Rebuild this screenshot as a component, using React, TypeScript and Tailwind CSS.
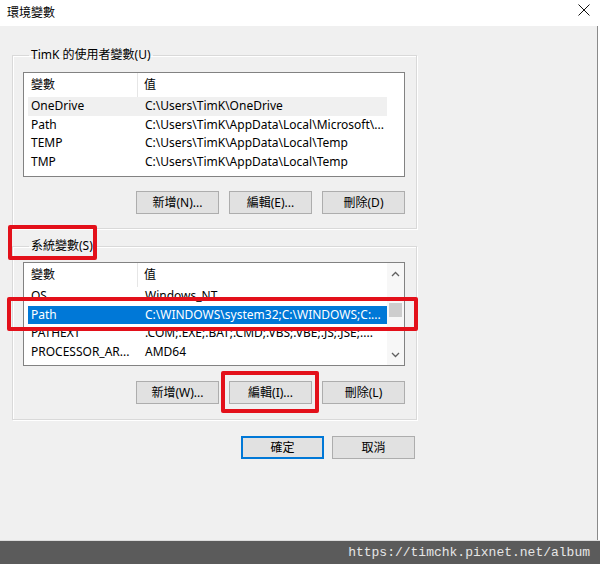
import React from "react";

type Row = { name: string; value: string; tone?: "hover" | "selected" };

const userVars: Row[] = [
  { name: "OneDrive", value: "C:\\Users\\TimK\\OneDrive", tone: "hover" },
  { name: "Path", value: "C:\\Users\\TimK\\AppData\\Local\\Microsoft\\..." },
  { name: "TEMP", value: "C:\\Users\\TimK\\AppData\\Local\\Temp" },
  { name: "TMP", value: "C:\\Users\\TimK\\AppData\\Local\\Temp" },
];

const systemVars: Row[] = [
  { name: "OS", value: "Windows_NT" },
  { name: "Path", value: "C:\\WINDOWS\\system32;C:\\WINDOWS;C:...", tone: "selected" },
  { name: "PATHEXT", value: ".COM;.EXE;.BAT;.CMD;.VBS;.VBE;.JS;.JSE;...." },
  { name: "PROCESSOR_AR...", value: "AMD64" },
];

function Chevron({ up }: { up?: boolean }) {
  return (
    <svg width="9" height="6" viewBox="0 0 9 6" className="text-[#606060]">
      <polyline
        points={up ? "1,5 4.5,1.5 8,5" : "1,1 4.5,4.5 8,1"}
        fill="none"
        stroke="currentColor"
        strokeWidth="1.3"
      />
    </svg>
  );
}

function ListView({ rows, height, scroll }: { rows: Row[]; height: string; scroll?: boolean }) {
  return (
    <div className={`flex w-[382px] ${height} border border-[#828282] bg-white overflow-hidden`}>
      <div className="flex-1 overflow-hidden">
        <div className="flex h-[24px] items-center">
          <div className="w-[114px] h-full flex items-center pl-[7px] border-r border-[#e6e6e6]">變數</div>
          <div className="pl-[6px]">值</div>
        </div>
        {rows.map((r) => (
          <div
            key={r.name}
            className={`ml-[4px] flex h-[18.5px] items-center whitespace-nowrap ${
              r.tone === "selected"
                ? "bg-[#0078d7] text-white"
                : r.tone === "hover"
                ? "bg-[#f0f0f0]"
                : ""
            }`}
          >
            <div className="w-[117px] pl-[3px]">{r.name}</div>
            <div>{r.value}</div>
          </div>
        ))}
      </div>
      <div className={`w-[17px] flex flex-col items-center ${scroll ? "bg-[#f7f7f7]" : ""}`}>
        {scroll && (
          <>
            <div className="h-[17px] mt-[2px] flex items-center justify-center">
              <Chevron up />
            </div>
            <div className="flex-1 w-full px-[2px] pt-[21px]">
              <div className="h-[14px] bg-[#cdcdcd]" />
            </div>
            <div className="h-[17px] mb-[2px] flex items-center justify-center">
              <Chevron />
            </div>
          </>
        )}
      </div>
    </div>
  );
}

function Btn({ children, primary }: { children: React.ReactNode; primary?: boolean }) {
  return (
    <button
      className={`w-[83px] h-[23px] bg-[#e1e1e1] text-[12px] leading-none ${
        primary ? "border-2 border-[#0078d7]" : "border border-[#adadad]"
      }`}
    >
      {children}
    </button>
  );
}

function Group({
  label,
  children,
  className,
}: {
  label: string;
  children: React.ReactNode;
  className?: string;
}) {
  return (
    <fieldset
      className={`w-[405px] border border-[#d9d9d9] shadow-[inset_1px_1px_0_#fff,1px_1px_0_#fff] pl-[10px] ${className ?? ""}`}
    >
      <legend className="ml-[6px] px-[2px] leading-[16px] text-[12px]">{label}</legend>
      {children}
    </fieldset>
  );
}

export default function App() {
  return (
    <div className="relative w-[600px] h-[564px] flex flex-col bg-white text-[12px] text-black font-['Noto_Sans','Noto_Sans_CJK_TC',sans-serif] overflow-hidden">
      {/* title bar */}
      <div className="h-[26px] flex items-center justify-between pl-[7px] pr-[10px] shrink-0">
        <span className="leading-none">環境變數</span>
        <svg width="12" height="12" viewBox="0 0 12 12" className="mb-[6px]">
          <path d="M0.5 0.5L11.5 11.5M11.5 0.5L0.5 11.5" stroke="#111" strokeWidth="1" />
        </svg>
      </div>

      {/* dialog body */}
      <div className="flex-1 w-[598px] bg-[#f0f0f0] border-r border-[#8a8a8a] pl-[12px]">
        <Group label="TimK 的使用者變數(U)" className="mt-[21px] pb-[14px]">
          <div className="mt-[9px]">
            <ListView rows={userVars} height="h-[105px]" />
          </div>
          <div className="mt-[14px] flex justify-end gap-[10px] w-[382px]">
            <Btn>新增(N)...</Btn>
            <Btn>編輯(E)...</Btn>
            <Btn>刪除(D)</Btn>
          </div>
        </Group>

        <Group label="系統變數(S)" className="mt-[9px] pb-[15px]">
          <div className="mt-[8px]">
            <ListView rows={systemVars} height="h-[104px]" scroll />
          </div>
          <div className="mt-[15px] flex justify-end gap-[10px] w-[382px]">
            <Btn>新增(W)...</Btn>
            <Btn>編輯(I)...</Btn>
            <Btn>刪除(L)</Btn>
          </div>
        </Group>

        <div className="mt-[16px] flex gap-[8px] pl-[229px]">
          <Btn primary>確定</Btn>
          <Btn>取消</Btn>
        </div>
      </div>

      {/* watermark bar */}
      <div className="h-[24px] shrink-0 bg-[#5b5b5b] border-t border-[#dcdcdc] flex items-center justify-end pr-[10px]">
        <span className="font-['Liberation_Mono',monospace] text-[13px] text-[#e6e6e6]">
          https://timchk.pixnet.net/album
        </span>
      </div>

      {/* red annotation boxes */}
      <div className="absolute left-[8px] top-[225px] w-[89px] h-[35px] border-4 border-[#e3101a] rounded-[2px]" />
      <div className="absolute left-[7px] top-[297px] w-[411px] h-[34px] border-4 border-[#e3101a] rounded-[2px]" />
      <div className="absolute left-[221px] top-[371px] w-[98px] h-[42px] border-4 border-[#e3101a] rounded-[2px]" />
    </div>
  );
}
